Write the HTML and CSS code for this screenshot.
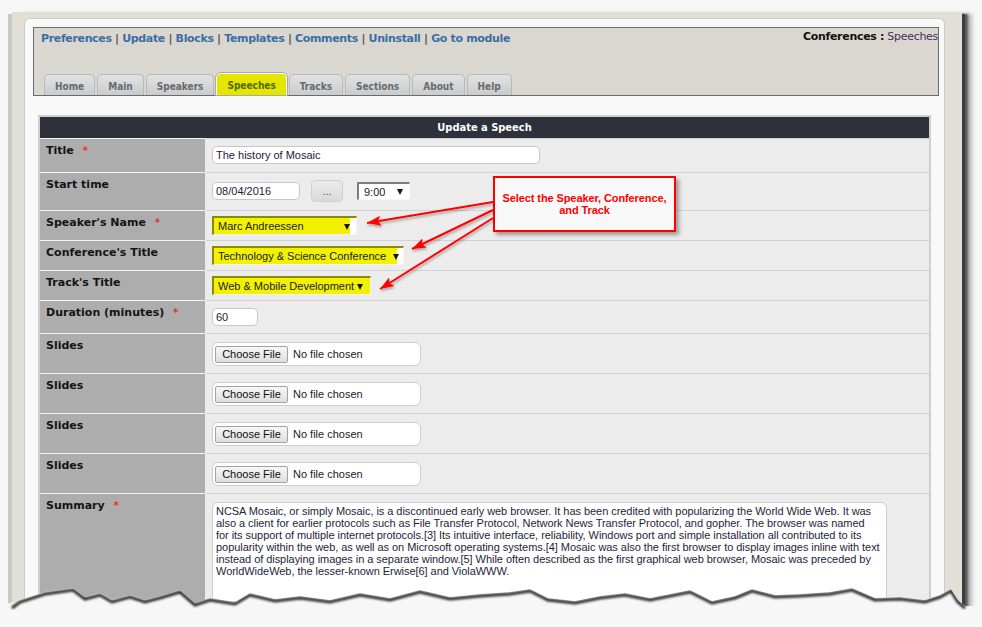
FILE: index.html
```html
<!DOCTYPE html>
<html lang="en">
<head>
<meta charset="utf-8">
<title>Update a Speech</title>
<link rel="stylesheet" href="styles.css">
</head>
<body>
<div class="frame">
  <div class="panel">
    <div class="adminbar">
      <div class="toprow">
        <nav class="links"><a href="#">Preferences</a> | <a href="#">Update</a> | <a href="#">Blocks</a> | <a href="#">Templates</a> | <a href="#">Comments</a> | <a href="#">Uninstall</a> | <a href="#">Go to module</a></nav>
        <div class="crumb"><b>Conferences :</b> Speeches</div>
      </div>
      <ul class="tabs">
        <li>Home</li>
        <li>Main</li>
        <li>Speakers</li>
        <li class="active">Speeches</li>
        <li>Tracks</li>
        <li>Sections</li>
        <li>About</li>
        <li>Help</li>
      </ul>
    </div>

    <div class="formbox">
      <div class="formhead">Update a Speech</div>

      <div class="row r-title">
        <div class="lbl">Title <span class="req">*</span></div>
        <div class="val"><div class="txt w-title">The history of Mosaic</div></div>
      </div>

      <div class="row r-time">
        <div class="lbl">Start time</div>
        <div class="val inline">
          <div class="txt w-date">08/04/2016</div>
          <div class="btn-dots">...</div>
          <div class="select plain w-time"><span>9:00</span><i class="caret"></i></div>
        </div>
      </div>

      <div class="row r-sel">
        <div class="lbl">Speaker's Name <span class="req">*</span></div>
        <div class="val"><div class="select hl w-speaker"><span>Marc Andreessen</span><i class="caret"></i></div></div>
      </div>

      <div class="row r-sel">
        <div class="lbl">Conference's Title</div>
        <div class="val"><div class="select hl w-conf"><span>Technology &amp; Science Conference</span><i class="caret"></i></div></div>
      </div>

      <div class="row r-sel">
        <div class="lbl">Track's Title</div>
        <div class="val"><div class="select hl full w-track"><span>Web &amp; Mobile Development</span><i class="caret"></i></div></div>
      </div>

      <div class="row r-dur">
        <div class="lbl">Duration (minutes) <span class="req">*</span></div>
        <div class="val"><div class="txt w-dur">60</div></div>
      </div>

      <div class="row r-file">
        <div class="lbl">Slides</div>
        <div class="val"><div class="file"><span class="fbtn">Choose File</span><span>No file chosen</span></div></div>
      </div>
      <div class="row r-file">
        <div class="lbl">Slides</div>
        <div class="val"><div class="file"><span class="fbtn">Choose File</span><span>No file chosen</span></div></div>
      </div>
      <div class="row r-file">
        <div class="lbl">Slides</div>
        <div class="val"><div class="file"><span class="fbtn">Choose File</span><span>No file chosen</span></div></div>
      </div>
      <div class="row r-file">
        <div class="lbl">Slides</div>
        <div class="val"><div class="file"><span class="fbtn">Choose File</span><span>No file chosen</span></div></div>
      </div>

      <div class="row r-sum">
        <div class="lbl">Summary <span class="req">*</span></div>
        <div class="val"><div class="area">NCSA Mosaic, or simply Mosaic, is a discontinued early web browser. It has been credited with popularizing the World Wide Web. It was<br>also a client for earlier protocols such as File Transfer Protocol, Network News Transfer Protocol, and gopher. The browser was named<br>for its support of multiple internet protocols.[3] Its intuitive interface, reliability, Windows port and simple installation all contributed to its<br>popularity within the web, as well as on Microsoft operating systems.[4] Mosaic was also the first browser to display images inline with text<br>instead of displaying images in a separate window.[5] While often described as the first graphical web browser, Mosaic was preceded by<br>WorldWideWeb, the lesser-known Erwise[6] and ViolaWWW.</div></div>
      </div>
    </div>
  </div>
</div>

<div class="callout">Select the Speaker, Conference,<br>and Track</div>

<svg class="arrows" width="982" height="627" viewBox="0 0 982 627">
  <defs>
    <marker id="head" markerUnits="userSpaceOnUse" markerWidth="15" markerHeight="10" refX="14" refY="5" orient="auto">
      <path d="M0,0 L14,5 L0,10 L3,5 z" fill="#ff0000"/>
    </marker>
    <filter id="sh" x="-10%" y="-10%" width="130%" height="130%">
      <feDropShadow dx="1" dy="2" stdDeviation="1" flood-color="#000" flood-opacity="0.3"/>
    </filter>
  </defs>
  <g filter="url(#sh)" stroke="#ff0000" stroke-width="2" fill="none">
    <line x1="493" y1="202" x2="367" y2="223" marker-end="url(#head)"/>
    <line x1="493" y1="210" x2="412" y2="249" marker-end="url(#head)"/>
    <line x1="493" y1="218" x2="380" y2="289" marker-end="url(#head)"/>
  </g>
</svg>

<svg class="tear" width="982" height="52" viewBox="0 575 982 52">
  <defs>
    <clipPath id="below">
      <polygon points="0,606 20,600 45,592 73,588 85,597 100,593 112,600 130,595 145,600 160,596 180,590 195,603 210,598 235,602 250,593 275,599 300,596 330,600 360,593 390,598 420,590 450,597 480,594 510,592 530,589 548,598 575,601 600,596 625,593 650,598 690,590 712,601 735,596 752,589 775,595 800,594 830,592 852,588 875,598 900,597 925,600 940,595 951,589 958,600 965,606 982,606 982,627 0,627"/>
    </clipPath>
    <filter id="blur"><feGaussianBlur stdDeviation="1.2"/></filter>
  </defs>
  <polygon fill="#f7f7f7" points="0,606 20,600 45,592 73,588 85,597 100,593 112,600 130,595 145,600 160,596 180,590 195,603 210,598 235,602 250,593 275,599 300,596 330,600 360,593 390,598 420,590 450,597 480,594 510,592 530,589 548,598 575,601 600,596 625,593 650,598 690,590 712,601 735,596 752,589 775,595 800,594 830,592 852,588 875,598 900,597 925,600 940,595 951,589 958,600 965,606 982,606 982,627 0,627"/>
  <g clip-path="url(#below)">
    <polyline filter="url(#blur)" transform="translate(0,2)" fill="none" stroke="#2a2a2a" stroke-width="3" points="12,606 20,600 45,592 73,588 85,597 100,593 112,600 130,595 145,600 160,596 180,590 195,603 210,598 235,602 250,593 275,599 300,596 330,600 360,593 390,598 420,590 450,597 480,594 510,592 530,589 548,598 575,601 600,596 625,593 650,598 690,590 712,601 735,596 752,589 775,595 800,594 830,592 852,588 875,598 900,597 925,600 940,595 951,589 958,600 965,606"/>
  </g>
</svg>
</body>
</html>
```

FILE: styles.css
```css
html, body {
  margin: 0;
  height: 627px;
  overflow: hidden;
  background: #f7f7f7;
}
body {
  position: relative;
  font-family: "Liberation Sans", Arial, sans-serif;
}

.frame {
  margin: 12px 0 0 12px;
  width: 950px;
  height: 615px;
  box-sizing: border-box;
  padding: 6px 17px 0 12px;
  background: #e2dfd6;
  box-shadow: -4px 2px 0 #cbc8c1, 3px 2px 0 #3c3c3c, 6px 2px 2px #5a5a5a, 10px 2px 4px rgba(0,0,0,0.25);
}

.panel {
  height: 100%;
  box-sizing: border-box;
  border: 1px solid #cbcbcb;
  border-bottom: 0;
  border-radius: 6px 6px 0 0;
  background: #f9f9f9;
  padding: 8px 0 0 8px;
}

.adminbar {
  width: 906px;
  height: 69px;
  box-sizing: border-box;
  border: 1px solid #6b6b6b;
  background: #dad7d0;
  display: flex;
  flex-direction: column;
  justify-content: space-between;
}

.toprow {
  display: flex;
  justify-content: space-between;
  padding-left: 7px;
}

.links, .crumb, .lbl {
  font-family: "DejaVu Sans", sans-serif;
}
.tabs, .formhead {
  font-family: "DejaVu Sans Condensed", "DejaVu Sans", sans-serif;
  font-stretch: condensed;
}

.links {
  padding-top: 4px;
  font-size: 11px;
  line-height: 13px;
  font-weight: bold;
  letter-spacing: -0.35px;
  color: #555;
}
.links a {
  color: #3b6da3;
  text-decoration: none;
}

.crumb {
  padding-top: 2px;
  font-size: 11px;
  line-height: 13px;
  letter-spacing: -0.3px;
  color: #4a2d5a;
  white-space: nowrap;
}
.crumb b { color: #111; }

.tabs {
  display: flex;
  align-items: flex-end;
  gap: 2px;
  margin: 0 0 0 10px;
  padding: 0;
  list-style: none;
}
.tabs li {
  height: 21px;
  box-sizing: border-box;
  padding: 5px 10px 0;
  border: 1px solid #b9b9b9;
  border-bottom: 0;
  border-radius: 5px 5px 0 0;
  background: linear-gradient(#e1e2e2, #c8ccd0);
  font-size: 10px;
  line-height: 13px;
  font-weight: bold;
  color: #6a6a6a;
}
.tabs li.active {
  height: 22px;
  padding-top: 5px;
  background: #e5e500;
  color: #4e6a00;
  border: 1px solid #fff;
  border-bottom: 0;
  box-shadow: 0 0 0 1px #a9a9a9;
}

.formbox {
  margin: 19px 0 0 5px;
  width: 893px;
  box-sizing: border-box;
  border: 2px solid #cfcfcf;
  border-bottom: 0;
}

.formhead {
  height: 21px;
  background: #2d313b;
  color: #fff;
  font-size: 11px;
  line-height: 21px;
  font-weight: bold;
  text-align: center;
}

.row {
  display: grid;
  grid-template-columns: 166px 1fr;
  box-sizing: border-box;
}
.r-title { height: 34px; }
.r-time { height: 38px; }
.r-sel { height: 30px; }
.r-dur { height: 33px; }
.r-file { height: 40px; }
.r-sum { height: 110px; }

.lbl {
  background: #adadad;
  border-top: 1px solid #f3f3f3;
  border-right: 1px solid #e8e8e8;
  padding: 5px 6px 0;
  font-size: 11px;
  line-height: 14px;
  font-weight: bold;
  color: #141414;
}
.req {
  margin-left: 5px;
  color: #f00;
  font-weight: normal;
}

.val {
  background: #ececec;
  border-top: 1px solid #d2d2d2;
  padding: 5px 0 0 6px;
  font-size: 11px;
  color: #1b1b3a;
}
.r-title .val, .r-time .val, .r-dur .val { padding-top: 7px; }
.r-file .val, .r-sum .val { padding-top: 8px; }

.inline {
  display: flex;
  align-items: flex-start;
}

.txt {
  box-sizing: border-box;
  height: 18px;
  border: 1px solid #c8c8c8;
  border-radius: 5px;
  background: #fff;
  padding: 0 3px;
  font-size: 11px;
  line-height: 16px;
  color: #1b1b3a;
  white-space: nowrap;
}
.w-title { width: 328px; }
.w-date { width: 88px; margin-top: 2px; }
.w-dur { width: 46px; }

.btn-dots {
  width: 32px;
  height: 22px;
  box-sizing: border-box;
  margin-left: 11px;
  border: 1px solid #cfcfcf;
  border-radius: 4px;
  background: linear-gradient(#ebebeb, #d9d9d9);
  color: #555;
  font-size: 11px;
  line-height: 20px;
  text-align: center;
}

.select {
  display: flex;
  align-items: center;
  justify-content: space-between;
  box-sizing: border-box;
  height: 19px;
  border-top: 2px solid #8a8a00;
  border-left: 2px solid #8a8a00;
  border-right: 1px solid #f4f4f4;
  border-bottom: 1px solid #f4f4f4;
  padding: 0 6px 0 4px;
  font-size: 11px;
  color: #1a1a1a;
  white-space: nowrap;
}
.caret {
  flex: none;
  width: 0;
  height: 0;
  border-left: 3px solid transparent;
  border-right: 3px solid transparent;
  border-top: 6px solid #151515;
  margin-top: 1px;
}
.select.hl {
  background: linear-gradient(90deg, #f2f200 calc(100% - 6px), #fff calc(100% - 6px));
}
.select.hl.full { background: #f2f200; }
.select.plain {
  margin: 2px 0 0 14px;
  height: 18px;
  background: #fff;
  border-top-color: #7d7d7d;
  border-left-color: #7d7d7d;
  padding: 0 6px 0 5px;
}
.w-time { width: 53px; }
.w-speaker { width: 145px; padding-right: 6px; }
.w-conf {
  width: 192px;
  padding-right: 4px;
  background: linear-gradient(90deg, #f2f200 calc(100% - 3px), #fff calc(100% - 3px));
}
.w-track { width: 159px; padding-right: 7px; }

.file {
  display: flex;
  align-items: center;
  gap: 5px;
  width: 209px;
  height: 24px;
  box-sizing: border-box;
  border: 1px solid #cdcdcd;
  border-radius: 6px;
  background: #fff;
  padding-left: 2px;
  font-size: 11px;
  color: #222;
}
.fbtn {
  width: 73px;
  height: 17px;
  box-sizing: border-box;
  border: 1px solid #a3a3a3;
  border-radius: 2px;
  background: linear-gradient(#f7f7f7, #dedede);
  color: #111;
  line-height: 15px;
  text-align: center;
}

.area {
  width: 675px;
  height: 100px;
  box-sizing: border-box;
  border: 1px solid #cdcdcd;
  border-radius: 6px;
  background: #fff;
  padding: 2px 3px;
  font-size: 11px;
  line-height: 12px;
  letter-spacing: -0.05px;
  color: #1e1e3c;
  white-space: nowrap;
}

.callout {
  position: absolute;
  left: 493px;
  top: 176px;
  width: 183px;
  height: 56px;
  box-sizing: border-box;
  border: 2px solid #ff0000;
  background: #f8f8f8;
  box-shadow: 3px 3px 4px rgba(0,0,0,0.35);
  padding-top: 14px;
  color: #ff0000;
  font-size: 11px;
  line-height: 12px;
  font-weight: bold;
  letter-spacing: -0.1px;
  text-align: center;
  white-space: nowrap;
}

.arrows {
  position: absolute;
  left: 0;
  top: 0;
  pointer-events: none;
}

.tear {
  position: absolute;
  left: 0;
  top: 575px;
}
```
